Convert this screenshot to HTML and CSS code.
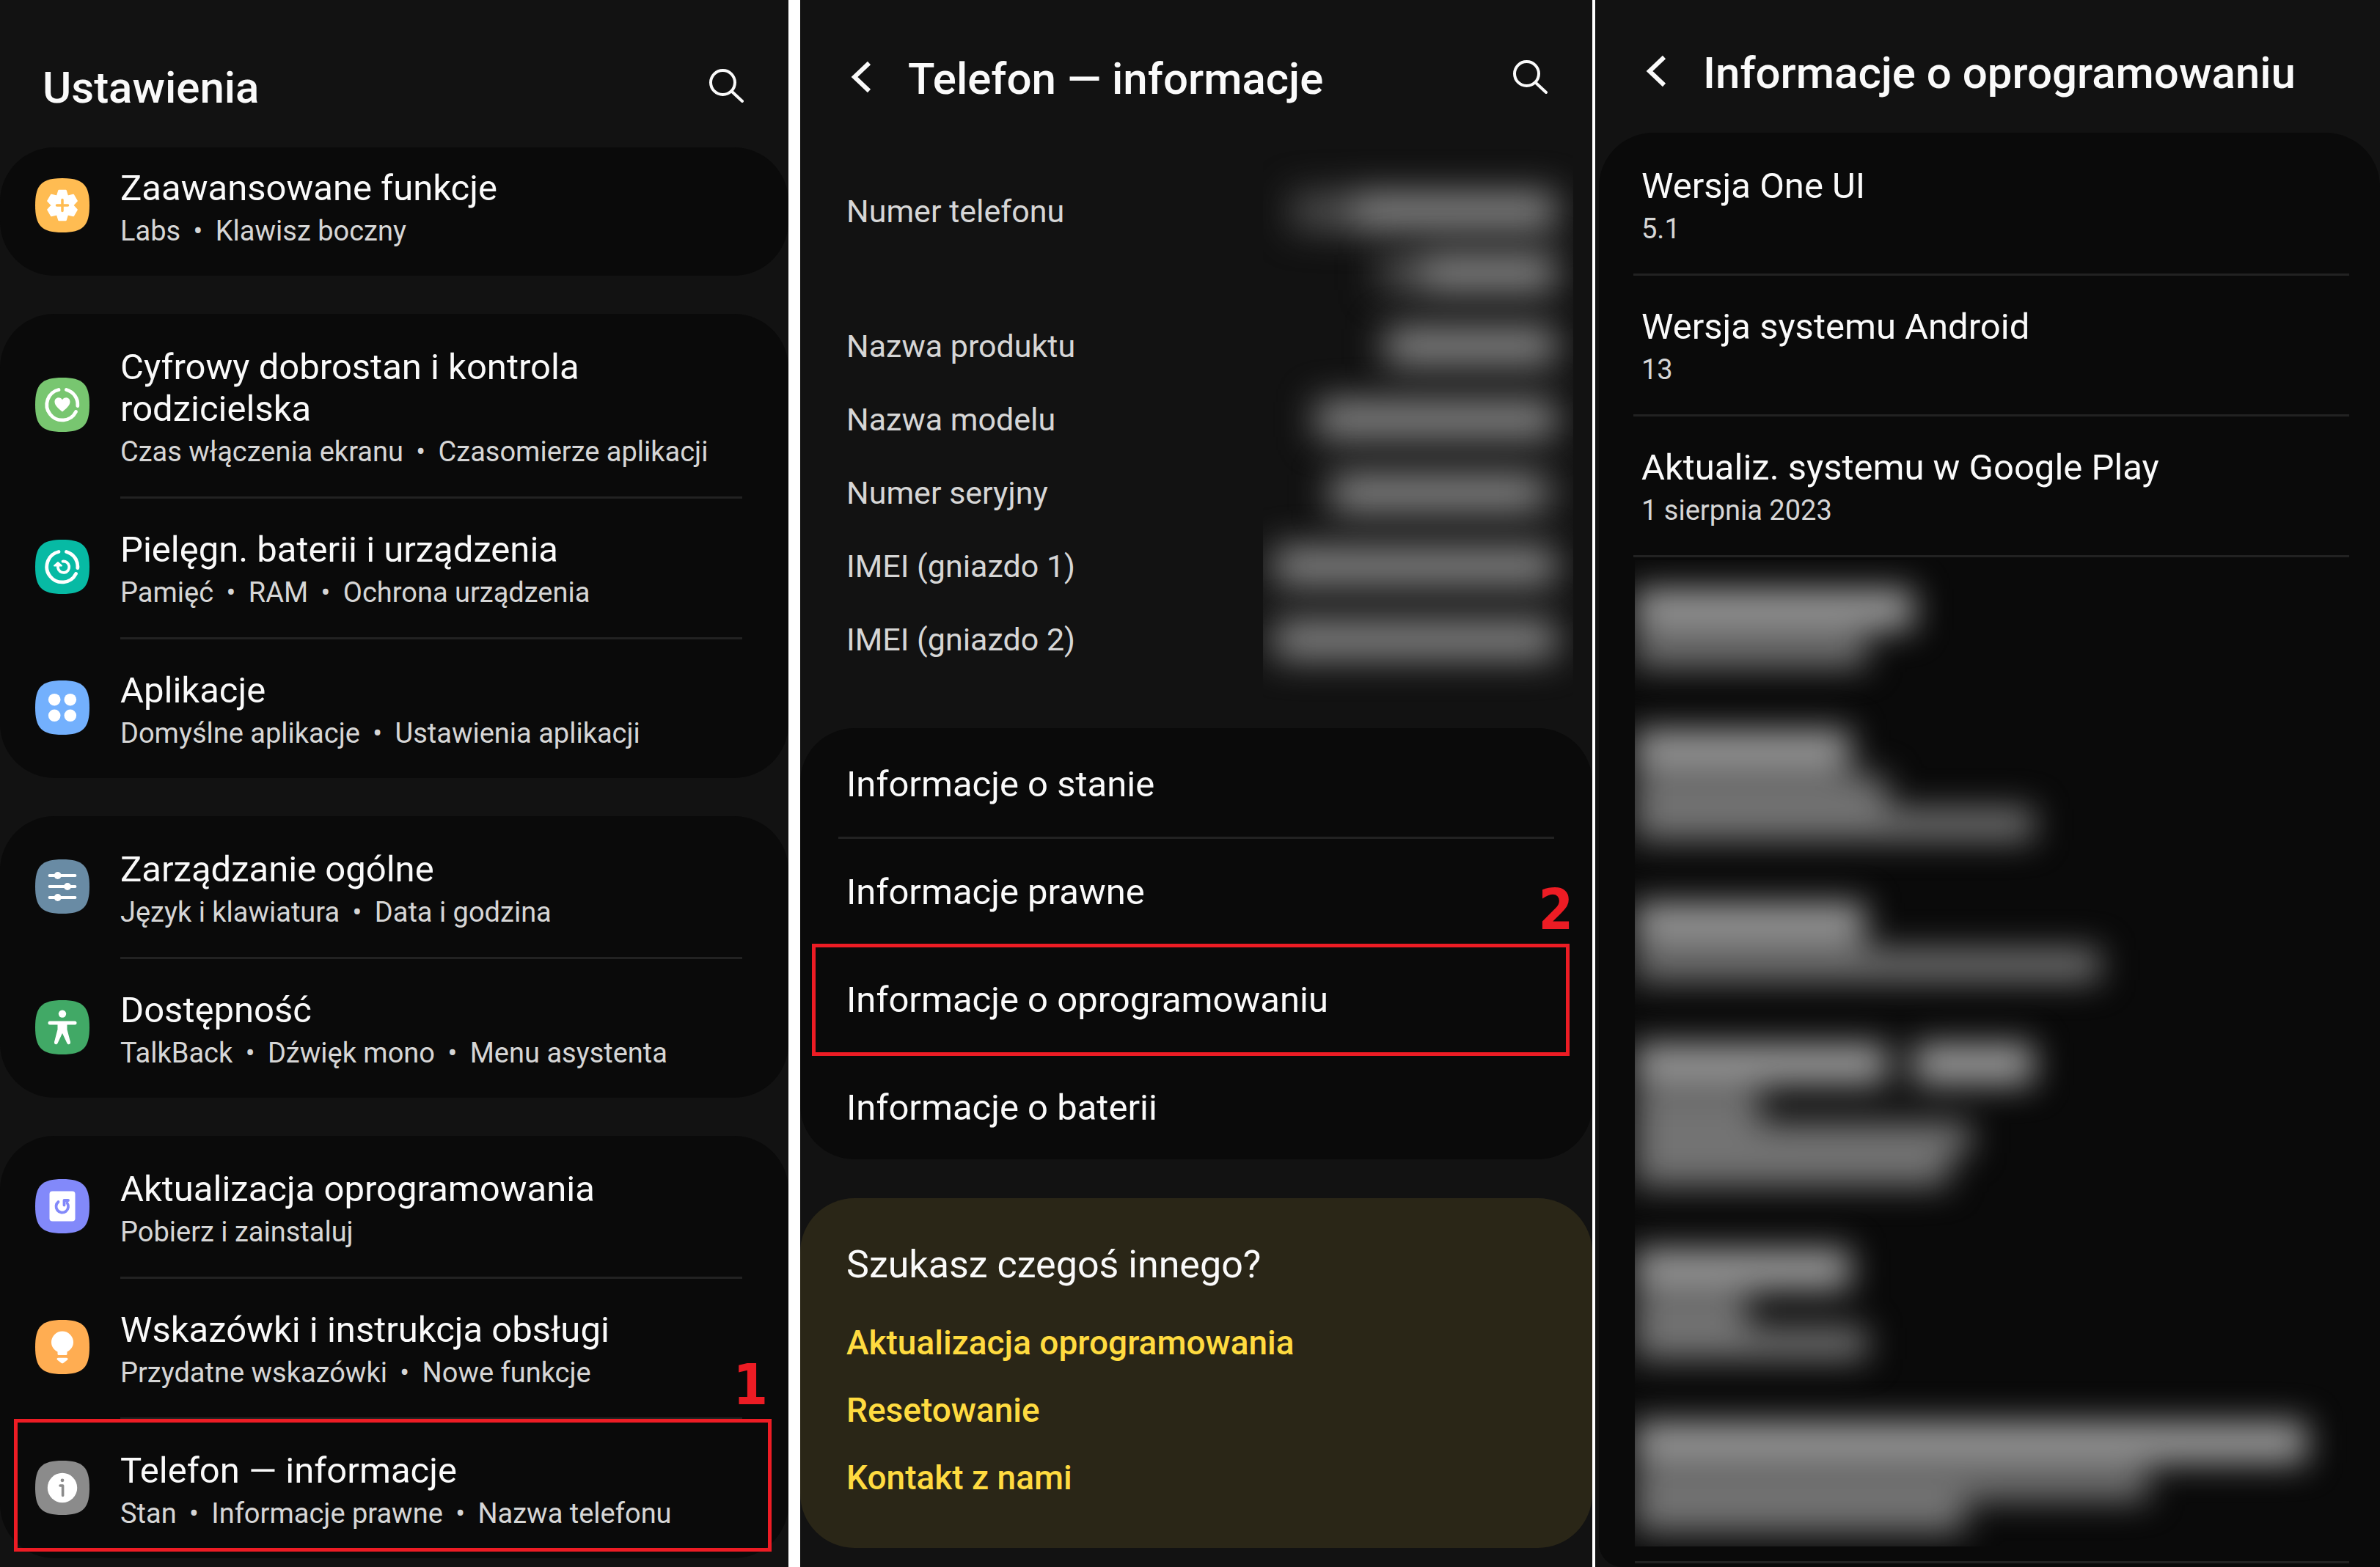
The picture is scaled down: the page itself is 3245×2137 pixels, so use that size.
FILE: index.html
```html
<!DOCTYPE html>
<html lang="pl">
<head>
<meta charset="utf-8">
<title>Ustawienia – informacje o oprogramowaniu</title>
<meta name="viewport" content="width=device-width, initial-scale=1">
<link rel="stylesheet" href="styles.css">
</head>
<body>
<main class="screens">

  <section class="screen screen-settings">
    <header class="bar">
      <h1 class="bar-title">Ustawienia</h1>
      <button class="icon-button" type="button" aria-label="Szukaj">
        <svg class="search-icon" viewBox="0 0 47 46"><circle cx="18.500" cy="18.500" r="16.500"/><path d="M30.500 30.500 45 44"/></svg>
      </button>
    </header>

    <nav class="groups">
      <div class="card card-scrolled">
        <a class="row" href="#">
          <svg class="app-icon" viewBox="0 0 74 74"><path fill="#ffbc52" d="M37 0C65 0 74 9 74 37S65 74 37 74 0 65 0 37 9 0 37 0Z"/><g transform="translate(37 37)"><path fill="#fff" stroke="#fff" stroke-width="2.500" stroke-linejoin="round" d="M-6.800-12.600-4.600-20 4.600-20 6.800-12.600 7.500-12.200 15-14 19.600-6 14.300-.4 14.300.4 19.600 6 15 14 7.500 12.200 6.800 12.600 4.600 20-4.600 20-6.800 12.600-7.500 12.200-15 14-19.600 6-14.300.4-14.300-.4-19.600-6-15-14-7.500-12.200Z"/><path stroke="#ffbc52" stroke-width="3.500" stroke-linecap="round" d="M-7.500 0H7.500M0-7.500V7.500"/></g></svg>
          <span class="row-text">
            <span class="row-title">Zaawansowane funkcje</span>
            <span class="row-sub">Labs <i class="dot">•</i> Klawisz boczny</span>
          </span>
        </a>
      </div>

      <div class="card">
        <a class="row" href="#">
          <svg class="app-icon" viewBox="0 0 74 74"><path fill="#78c670" d="M37 0C65 0 74 9 74 37S65 74 37 74 0 65 0 37 9 0 37 0Z"/><g fill="none" stroke="#fff" stroke-width="4.800" stroke-linecap="round"><path d="M42.500 16.500A21 21 0 0 1 57.800 38.500"/><path d="M55.500 46.500A21 21 0 1 1 32 16.500"/></g><path fill="#fff" d="M37 46.500C33 43 26.500 38.500 26.500 33 26.500 29.500 29 27.300 31.800 27.300 34 27.300 36 28.500 37 30.300 38 28.500 40 27.300 42.200 27.300 45 27.300 47.500 29.500 47.500 33 47.500 38.500 41 43 37 46.500Z"/></svg>
          <span class="row-text">
            <span class="row-title">Cyfrowy dobrostan i kontrola rodzicielska</span>
            <span class="row-sub">Czas włączenia ekranu <i class="dot">•</i> Czasomierze aplikacji</span>
          </span>
        </a>
        <a class="row" href="#">
          <svg class="app-icon" viewBox="0 0 74 74"><path fill="#07baa4" d="M37 0C65 0 74 9 74 37S65 74 37 74 0 65 0 37 9 0 37 0Z"/><g fill="none" stroke="#fff" stroke-width="4.800" stroke-linecap="round"><path d="M42.500 16.500A21 21 0 0 1 57.800 38.500"/><path d="M55.500 46.500A21 21 0 1 1 32 16.500"/><path stroke-width="3.800" d="M37.500 29.600A7.700 7.700 0 1 1 31 38.500V34"/></g><path fill="#fff" stroke="#fff" stroke-width="2" stroke-linejoin="round" d="M26 35.500 31 31 36 35.500Z"/></svg>
          <span class="row-text">
            <span class="row-title">Pielęgn. baterii i urządzenia</span>
            <span class="row-sub">Pamięć <i class="dot">•</i> RAM <i class="dot">•</i> Ochrona urządzenia</span>
          </span>
        </a>
        <a class="row" href="#">
          <svg class="app-icon" viewBox="0 0 74 74"><path fill="#73b0fd" d="M37 0C65 0 74 9 74 37S65 74 37 74 0 65 0 37 9 0 37 0Z"/><g fill="#fff"><circle cx="26.200" cy="26.200" r="8.300"/><circle cx="47.800" cy="26.200" r="8.300"/><circle cx="26.200" cy="47.800" r="8.300"/><circle cx="47.800" cy="47.800" r="8.300"/></g></svg>
          <span class="row-text">
            <span class="row-title">Aplikacje</span>
            <span class="row-sub">Domyślne aplikacje <i class="dot">•</i> Ustawienia aplikacji</span>
          </span>
        </a>
      </div>

      <div class="card">
        <a class="row" href="#">
          <svg class="app-icon" viewBox="0 0 74 74"><path fill="#698ba4" d="M37 0C65 0 74 9 74 37S65 74 37 74 0 65 0 37 9 0 37 0Z"/><path stroke="#fff" stroke-width="3.800" stroke-linecap="round" d="M19.500 22H54.500M19.500 37H54.500M19.500 52H54.500"/><g fill="#fff"><circle cx="30.700" cy="22" r="4.900"/><circle cx="44" cy="37" r="4.900"/><circle cx="30.700" cy="52" r="4.900"/></g></svg>
          <span class="row-text">
            <span class="row-title">Zarządzanie ogólne</span>
            <span class="row-sub">Język i klawiatura <i class="dot">•</i> Data i godzina</span>
          </span>
        </a>
        <a class="row" href="#">
          <svg class="app-icon" viewBox="0 0 74 74"><path fill="#41a966" d="M37 0C65 0 74 9 74 37S65 74 37 74 0 65 0 37 9 0 37 0Z"/><circle fill="#fff" cx="37" cy="18.600" r="5.200"/><path fill="#fff" stroke="#fff" stroke-width="5" stroke-linecap="round" stroke-linejoin="round" d="M20 31H54"/><path fill="#fff" d="M30.500 30H43.500V40L48 57C48.500 60.500 44.500 61.500 43.300 58.500L37 45 30.700 58.500C29.500 61.500 25.500 60.500 26 57L30.500 40Z"/></svg>
          <span class="row-text">
            <span class="row-title">Dostępność</span>
            <span class="row-sub">TalkBack <i class="dot">•</i> Dźwięk mono <i class="dot">•</i> Menu asystenta</span>
          </span>
        </a>
      </div>

      <div class="card">
        <a class="row" href="#">
          <svg class="app-icon" viewBox="0 0 74 74"><path fill="#8289fa" d="M37 0C65 0 74 9 74 37S65 74 37 74 0 65 0 37 9 0 37 0Z"/><rect fill="#fff" x="19.500" y="16.500" width="35" height="41" rx="4"/><path fill="none" stroke="#8289fa" stroke-width="3.800" stroke-linecap="round" stroke-linejoin="round" d="M31.500 31A8.300 8.300 0 1 0 43.500 32.500M45 29H39.500V35.500"/></svg>
          <span class="row-text">
            <span class="row-title">Aktualizacja oprogramowania</span>
            <span class="row-sub">Pobierz i zainstaluj</span>
          </span>
        </a>
        <a class="row" href="#">
          <svg class="app-icon" viewBox="0 0 74 74"><path fill="#ffad52" d="M37 0C65 0 74 9 74 37S65 74 37 74 0 65 0 37 9 0 37 0Z"/><path fill="#fff" d="M37 15.500A15 15 0 0 1 52 30.500C52 36.500 48.500 41 43.500 43.500V46.500Q43.500 48 42 48H32Q30.500 48 30.500 46.500V43.500C25.500 41 22 36.500 22 30.500A15 15 0 0 1 37 15.500ZM31.500 51.800H42.500C44.500 51.800 45 53.500 44 54.500L38.500 58.800Q37 59.800 35.500 58.800L30 54.500C29 53.500 29.500 51.800 31.500 51.800Z"/></svg>
          <span class="row-text">
            <span class="row-title">Wskazówki i instrukcja obsługi</span>
            <span class="row-sub">Przydatne wskazówki <i class="dot">•</i> Nowe funkcje</span>
          </span>
        </a>
        <a class="row row-marked" href="#">
          <svg class="app-icon" viewBox="0 0 74 74"><path fill="#8b8b8b" d="M37 0C65 0 74 9 74 37S65 74 37 74 0 65 0 37 9 0 37 0Z"/><circle fill="#fff" cx="37" cy="37" r="20.200"/><circle fill="#8b8b8b" cx="37" cy="26.800" r="2.400"/><path fill="none" stroke="#8b8b8b" stroke-width="3.600" stroke-linecap="round" stroke-linejoin="round" d="M34 34H37.600V47.500"/></svg>
          <span class="row-text">
            <span class="row-title">Telefon — informacje</span>
            <span class="row-sub">Stan <i class="dot">•</i> Informacje prawne <i class="dot">•</i> Nazwa telefonu</span>
          </span>
          <span class="marker"><b class="marker-number">1</b></span>
        </a>
      </div>
    </nav>
  </section>

  <section class="screen screen-about">
    <header class="bar bar-nested">
      <button class="icon-button" type="button" aria-label="Wstecz">
        <svg class="back-icon" viewBox="0 0 28 44"><path d="M25 3 5 22 25 41"/></svg>
      </button>
      <h1 class="bar-title">Telefon — informacje</h1>
      <button class="icon-button" type="button" aria-label="Szukaj">
        <svg class="search-icon" viewBox="0 0 47 46"><circle cx="18.500" cy="18.500" r="16.500"/><path d="M30.500 30.500 45 44"/></svg>
      </button>
    </header>

    <dl class="facts">
      <div class="fact"><dt>Numer telefonu</dt><dd>
        <span class="smudge-line"><span class="smudge smudge-dim" style="width:84px"></span><span class="smudge" style="width:276px"></span></span>
        <span class="smudge-line"><span class="smudge smudge-dim" style="width:60px"></span><span class="smudge" style="width:182px"></span></span>
      </dd></div>
      <div class="fact"><dt>Nazwa produktu</dt><dd><span class="smudge-line"><span class="smudge" style="width:232px"></span></span></dd></div>
      <div class="fact"><dt>Nazwa modelu</dt><dd><span class="smudge-line"><span class="smudge" style="width:326px"></span></span></dd></div>
      <div class="fact"><dt>Numer seryjny</dt><dd><span class="smudge-line"><span class="smudge" style="width:282px"></span><span class="smudge smudge-dim" style="width:24px"></span></span></dd></div>
      <div class="fact"><dt>IMEI (gniazdo 1)</dt><dd><span class="smudge-line"><span class="smudge" style="width:384px"></span></span></dd></div>
      <div class="fact"><dt>IMEI (gniazdo 2)</dt><dd><span class="smudge-line"><span class="smudge" style="width:384px"></span></span></dd></div>
    </dl>

    <nav class="card card-links">
      <a class="link-row" href="#">Informacje o stanie</a>
      <a class="link-row" href="#">Informacje prawne</a>
      <a class="link-row link-row-marked" href="#">Informacje o oprogramowaniu<span class="marker"><b class="marker-number">2</b></span></a>
      <a class="link-row" href="#">Informacje o baterii</a>
    </nav>

    <aside class="hints">
      <h2 class="hints-title">Szukasz czegoś innego?</h2>
      <a class="hint" href="#">Aktualizacja oprogramowania</a>
      <a class="hint" href="#">Resetowanie</a>
      <a class="hint" href="#">Kontakt z nami</a>
    </aside>
  </section>

  <section class="screen screen-software">
    <header class="bar bar-nested">
      <button class="icon-button" type="button" aria-label="Wstecz">
        <svg class="back-icon" viewBox="0 0 28 44"><path d="M25 3 5 22 25 41"/></svg>
      </button>
      <h1 class="bar-title">Informacje o oprogramowaniu</h1>
    </header>

    <div class="card card-versions">
      <div class="version"><h2 class="row-title">Wersja One UI</h2><p class="row-sub">5.1</p></div>
      <div class="version"><h2 class="row-title">Wersja systemu Android</h2><p class="row-sub">13</p></div>
      <div class="version"><h2 class="row-title">Aktualiz. systemu w Google Play</h2><p class="row-sub">1 sierpnia 2023</p></div>

      <div class="hidden-versions" aria-hidden="true">
        <div class="hidden-list">
          <div class="hidden-version">
            <div class="streaks streaks-title"><span style="width:380px"></span></div>
            <div class="streaks"><span style="width:316px"></span></div>
          </div>
          <div class="hidden-version">
            <div class="streaks streaks-title"><span style="width:294px"></span></div>
            <div class="streaks"><span style="width:344px"></span></div>
            <div class="streaks"><span style="width:544px"></span></div>
          </div>
          <div class="hidden-version">
            <div class="streaks streaks-title"><span style="width:314px"></span></div>
            <div class="streaks"><span style="width:634px"></span></div>
          </div>
          <div class="hidden-version">
            <div class="streaks streaks-title"><span style="width:344px"></span><span style="width:164px"></span></div>
            <div class="streaks"><span style="width:170px"></span></div>
            <div class="streaks"><span style="width:458px"></span></div>
            <div class="streaks"><span style="width:428px"></span></div>
          </div>
          <div class="hidden-version">
            <div class="streaks streaks-title"><span style="width:294px"></span></div>
            <div class="streaks"><span style="width:154px"></span></div>
            <div class="streaks"><span style="width:316px"></span></div>
          </div>
          <div class="hidden-version">
            <div class="streaks streaks-title"><span style="width:916px"></span></div>
            <div class="streaks"><span style="width:700px"></span></div>
            <div class="streaks"><span style="width:450px"></span></div>
          </div>
        </div>
      </div>
    </div>
  </section>

</main>
</body>
</html>
```
FILE: styles.css
```css
:root {
  --screen: #121212;
  --card: #0a0a0a;
  --line: #222222;
  --text: #fafafa;
  --muted: #d6d6d6;
  --accent: #ffdb40;
  --mark: #ed1c24;
}

* {
  box-sizing: border-box;
}

body {
  margin: 0;
  background: #ffffff;
  color: var(--text);
  font-family: Roboto, "Liberation Sans", sans-serif;
}

h1,
h2,
p,
dl,
dd {
  margin: 0;
  font-weight: 400;
}

a {
  color: inherit;
  text-decoration: none;
}

.screens {
  display: grid;
  grid-template-columns: 1091fr 1084fr 1070fr;
  min-height: 100vh;
  overflow: hidden;
}

.screen {
  min-width: 0;
  background: var(--screen);
}

.screen-settings {
  margin-right: 16px;
}

.screen-about {
  margin-right: 4px;
}

/* Title bars */

.bar {
  display: flex;
  align-items: center;
  padding: 84px 61px 45px 58px;
}

.bar-nested {
  gap: 50px;
  padding: 72px 61px 94px 69px;
}

.screen-software .bar {
  padding-top: 64px;
  padding-bottom: 45px;
}

.bar-title {
  flex: 1;
  font-size: 60px;
  line-height: 72px;
  font-weight: 500;
  white-space: nowrap;
}

.icon-button {
  display: flex;
  padding: 0 0 7px;
  border: 0;
  background: none;
  color: inherit;
}

.search-icon {
  width: 47px;
  height: 46px;
  fill: none;
  stroke: currentColor;
  stroke-width: 4;
  stroke-linecap: round;
}

.back-icon {
  width: 28px;
  height: 44px;
  fill: none;
  stroke: currentColor;
  stroke-width: 6;
}

/* Cards and rows */

.groups {
  display: grid;
  gap: 52px;
}

.card {
  padding-top: 3px;
  border-radius: 74px;
  background: var(--card);
}

.card-scrolled {
  overflow: hidden;
  padding-top: 0;
}

.card-scrolled .row {
  margin-top: -14px;
}

.row {
  position: relative;
  display: flex;
  align-items: center;
  gap: 42px;
  padding: 0 63px 4px 48px;
}

.row + .row {
  margin-top: 3px;
}

.row + .row::before {
  content: "";
  position: absolute;
  top: -3px;
  left: 164px;
  right: 63px;
  height: 3px;
  background: var(--line);
}

.app-icon {
  flex: none;
  width: 74px;
  height: 74px;
}

.row-text {
  flex: 1;
  padding: 41px 0 35px;
}

.row-title {
  display: block;
  font-size: 49px;
  line-height: 57px;
}

.row-sub {
  display: block;
  margin-top: 8px;
  color: var(--muted);
  font-size: 38px;
  line-height: 44px;
}

.dot {
  margin: 0 8px;
  font-style: normal;
}

/* Step markers drawn over the rows */

.marker {
  position: absolute;
  z-index: 1;
  inset: -1px 23px 9px 19px;
  border: 5px solid var(--mark);
}

.marker-number {
  position: absolute;
  right: 0;
  bottom: 100%;
  color: var(--mark);
  font: 700 76px/102px "DejaVu Sans Condensed", "DejaVu Sans", sans-serif;
}

/* Phone details */

.facts {
  margin-right: 26px;
  padding-left: 63px;
}

.fact {
  display: flex;
  justify-content: space-between;
  color: var(--muted);
  font-size: 43px;
  line-height: 50px;
}

.fact dt {
  padding: 25px 0;
}

.fact dd {
  display: grid;
  gap: 34px;
  width: 423px;
  padding: 25px 24px 25px 0;
  overflow-x: clip;
}

.smudge-line {
  display: flex;
  justify-content: flex-end;
  height: 50px;
  filter: blur(25px);
}

.smudge {
  background: #8a8a8a;
}

.smudge-dim {
  background: #4e4e4e;
}

.card-links {
  margin-top: 71px;
  padding-top: 0;
}

.link-row {
  position: relative;
  display: block;
  padding: 48px 63px 42px;
  font-size: 49px;
  line-height: 57px;
}

.link-row:not(:last-child)::after {
  content: "";
  position: absolute;
  left: 52px;
  right: 52px;
  bottom: -4px;
  height: 3px;
  background: var(--line);
}

.link-row-marked {
  z-index: 1;
}

.link-row .marker {
  inset: 0 31px -6px 16px;
}

.link-row .marker-number {
  right: -10px;
}

.hints {
  display: grid;
  gap: 40px;
  margin-top: 53px;
  padding: 60px 63px 70px;
  border-radius: 74px;
  background: #2a2617;
}

.hints-title {
  padding-bottom: 9px;
  font-size: 52px;
  line-height: 62px;
}

.hint {
  color: var(--accent);
  font-size: 46px;
  line-height: 52px;
  font-weight: 500;
}

/* Software versions */

.card-versions {
  margin-left: 5px;
  padding-bottom: 5px;
  border-radius: 74px 74px 0 32px;
}

.version {
  margin: 0 42px 0 47px;
  padding: 41px 0 39px 11px;
  border-bottom: 3px solid var(--line);
}

.hidden-versions {
  margin: 4px 42px 0 49px;
  padding-bottom: 20px;
  border-bottom: 3px solid var(--line);
}

.hidden-list {
  overflow: hidden;
}

.hidden-version {
  padding: 38px 0 39px;
  filter: blur(23px);
}

.hidden-version + .hidden-version {
  padding-top: 45px;
}

.hidden-version:last-child {
  padding-bottom: 19px;
}

.streaks {
  display: flex;
  align-items: center;
  height: 44px;
}

.streaks span {
  height: 44px;
  background: #737373;
}

.streaks-title {
  gap: 36px;
  height: 64px;
  padding-bottom: 7px;
}

.streaks-title span {
  height: 56px;
  background: #9a9a9a;
}
```
